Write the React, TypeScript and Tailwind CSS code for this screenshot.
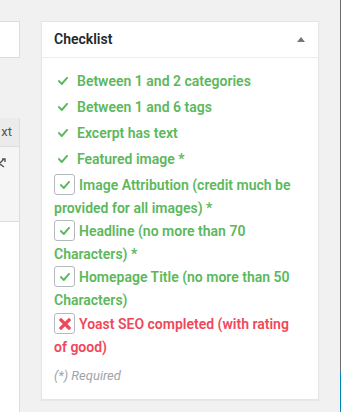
import React from 'react';

const GREEN = 'text-[#5cb85c]';

const Check = ({ className = '' }: { className?: string }) => (
  <svg className={className} width="10" height="8" viewBox="0 0 10 8" fill="none">
    <path d="M1 4.2 L3.8 7 L9 1" stroke="currentColor" strokeWidth="2" strokeLinecap="square" />
  </svg>
);

const Box = ({ failed }: { failed?: boolean }) => (
  <span className="inline-flex align-middle w-[21px] h-[21px] mr-[4px] -mt-[3px] items-center justify-center rounded-[3px] border border-[#b4b9be] bg-white">
    {failed ? (
      <svg width="12" height="12" viewBox="0 0 12 12">
        <path d="M2 2 L10 10 M10 2 L2 10" stroke="#f0475a" strokeWidth="3.2" strokeLinecap="square" />
      </svg>
    ) : (
      <Check className="text-[#5cb85c]" />
    )}
  </span>
);

const simpleItems = ['Between 1 and 2 categories', 'Between 1 and 6 tags', 'Excerpt has text', 'Featured image *'];

const boxItems = [
  { label: 'Image Attribution (credit much be provided for all images) *' },
  { label: 'Headline (no more than 70 Characters) *' },
  { label: 'Homepage Title (no more than 50 Characters)' },
  { label: 'Yoast SEO completed (with rating of good)', failed: true },
];

export default function App() {
  return (
    <div
      className="w-[341px] h-[412px] bg-[#f1f1f1] flex overflow-hidden"
      style={{ fontFamily: 'Roboto, "Liberation Sans", sans-serif' }}
    >
      {/* editor column, mostly off-screen */}
      <div className="w-[20px] flex flex-col pt-[21px]">
        <div className="h-[37px] bg-white border border-l-0 border-[#ddd]" />
        <div className="mt-[60px] h-[29px] bg-[#ebebeb] border-r border-b border-[#ddd] flex items-center justify-end pr-[7px] text-[13px] text-[#555]">
          xt
        </div>
        <div className="h-[75px] bg-[#f5f5f5] border-r border-b border-[#ddd] pt-[11px]">
          <svg width="9" height="10" viewBox="0 0 9 10" className="text-[#555]">
            <path d="M0 5 L4 1 M2 1 H5 V4 M0 6 L4 9" stroke="currentColor" strokeWidth="1.4" fill="none" />
          </svg>
        </div>
        <div className="flex-1 bg-white border-r border-[#ddd]" />
      </div>

      <div className="w-[21px]" />

      {/* checklist panel */}
      <div className="w-[278px] self-start mt-[21px] bg-white border border-[#e5e5e5] shadow-[0_1px_1px_rgba(0,0,0,0.04)]">
        <div className="h-[36px] border-b border-[#eee] flex items-center justify-between pl-[12px] pr-[13px]">
          <span className="text-[14px] font-semibold text-[#23282d]">Checklist</span>
          <svg width="8" height="5" viewBox="0 0 8 5">
            <path d="M0 5 L4 0 L8 5 Z" fill="#72777c" />
          </svg>
        </div>
        <div className="pl-[12px] pr-[20px] pt-[10px] pb-[12px] text-[14px] font-semibold">
          {simpleItems.map((t) => (
            <div key={t} className={`h-[26px] flex items-center ${GREEN}`}>
              <Check className="ml-[4px] mr-[9px]" />
              <span>{t}</span>
            </div>
          ))}
          <div className="mt-[2px]">
            {boxItems.map((it) => (
              <div
                key={it.label}
                className={`leading-[23px] ${it.failed ? 'text-[#f0475a] mt-[1px]' : GREEN}`}
              >
                <Box failed={it.failed} />
                {it.label}
              </div>
            ))}
          </div>
          <div className="mt-[5px] text-[13px] italic font-normal text-[#a0a5aa] leading-[23px]">(*) Required</div>
        </div>
      </div>

      <div className="flex-1" />
      <div className="w-px flex flex-col">
        <div className="flex-1 bg-[#6d6d6d]" />
        <div className="h-[40px] bg-[#0085ba]" />
      </div>
    </div>
  );
}
